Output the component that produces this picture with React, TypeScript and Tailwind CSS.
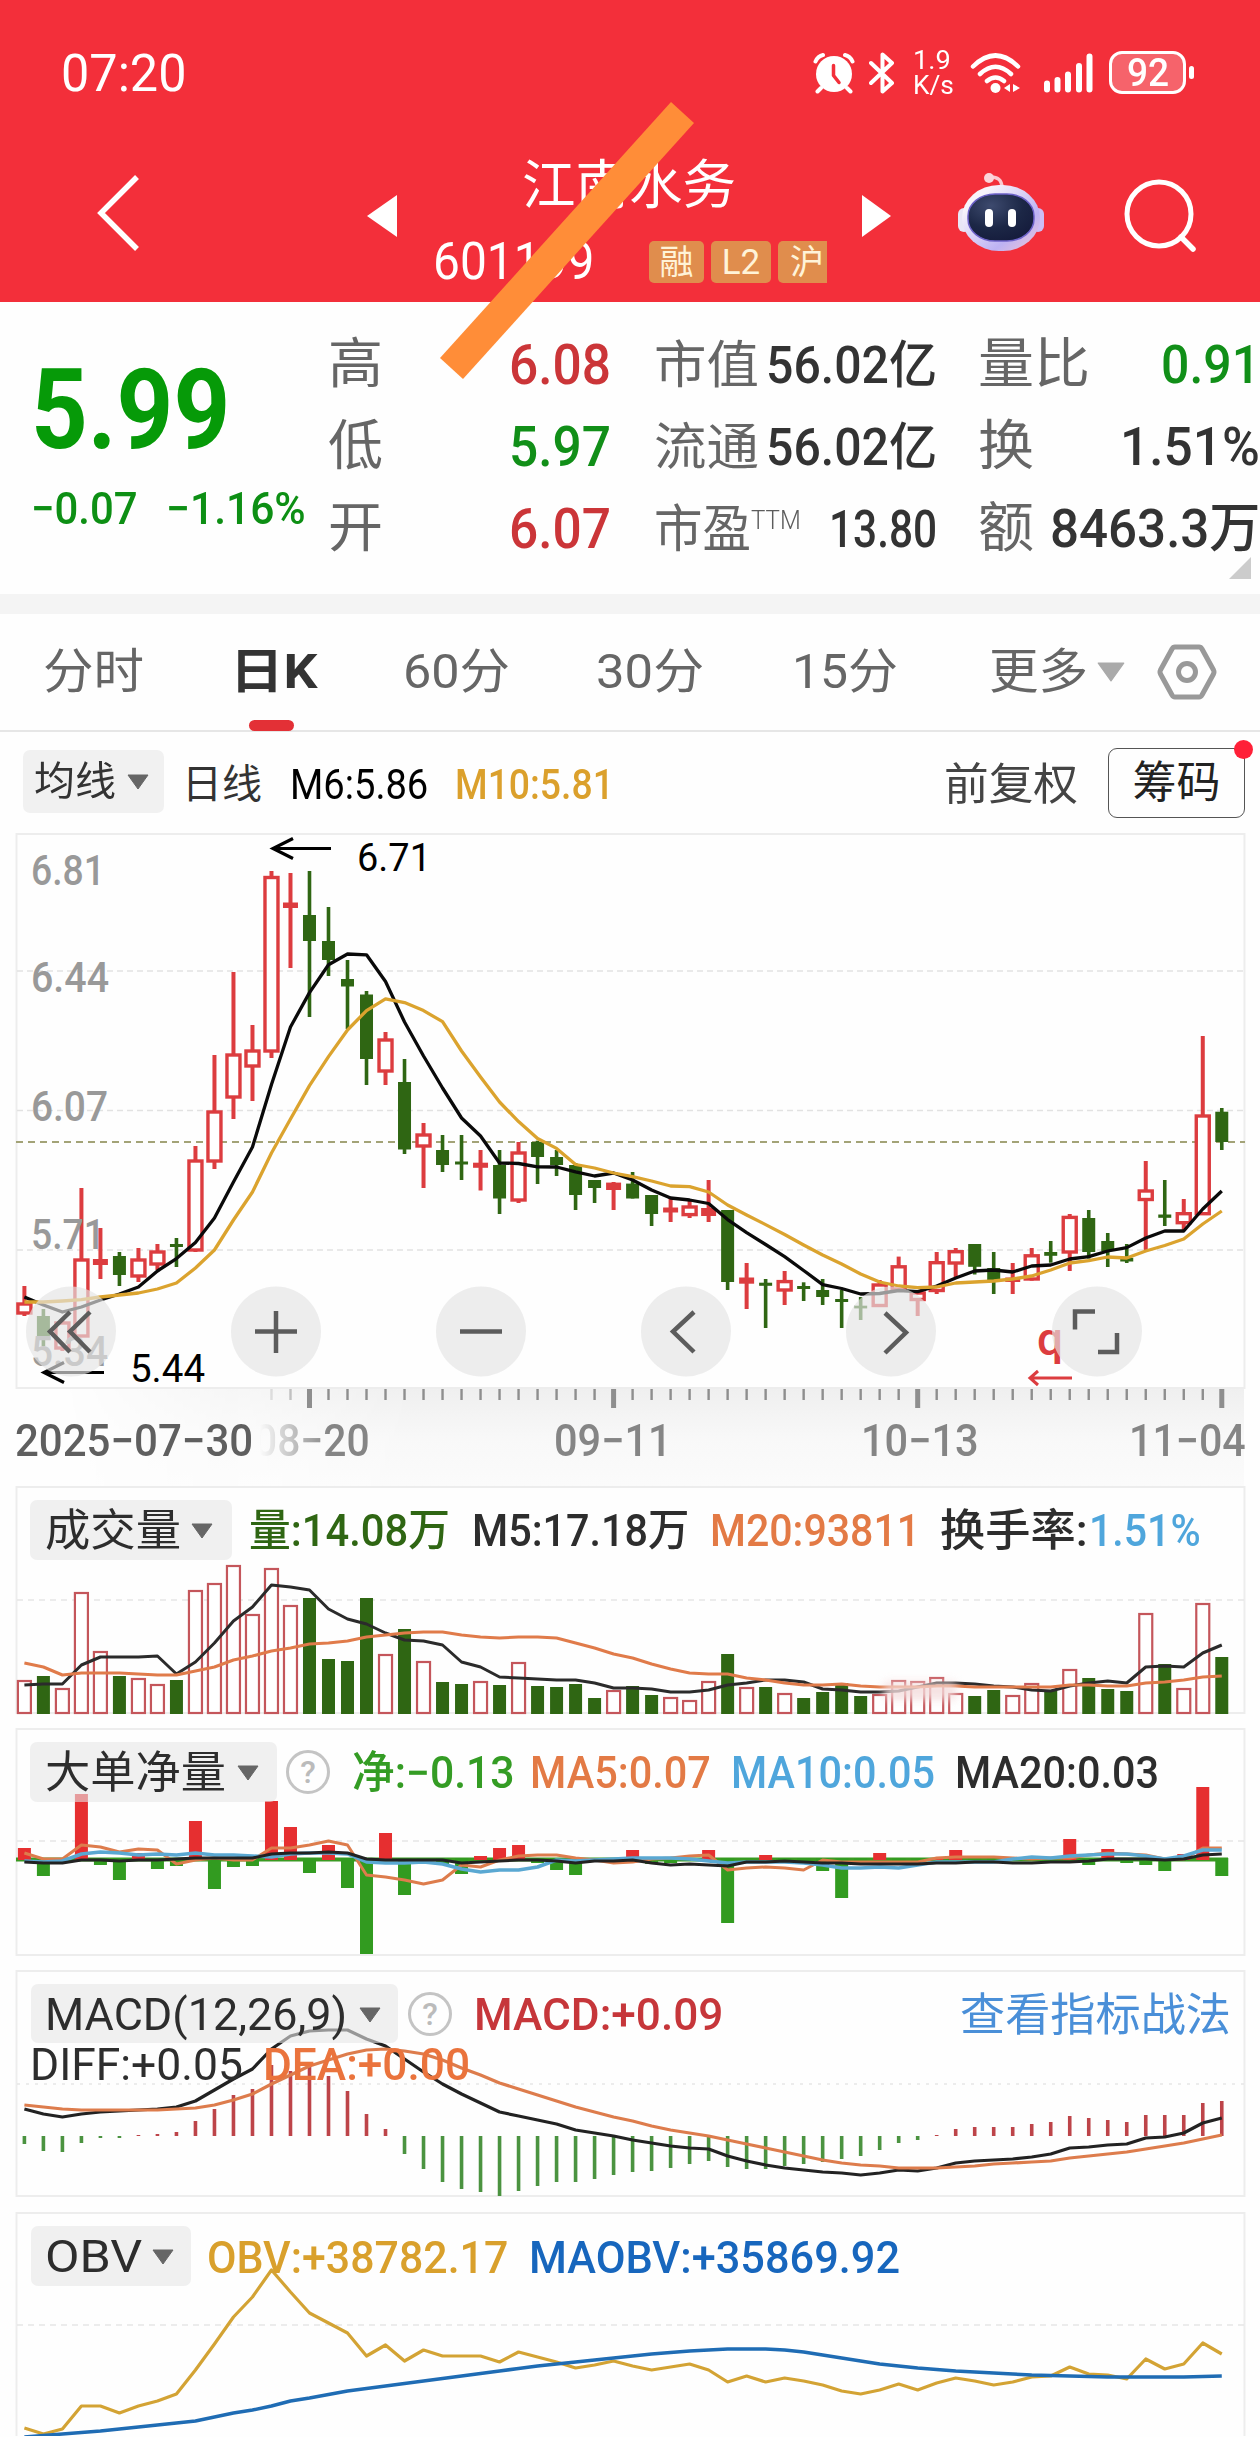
import type React from "react";
import { useLayoutEffect, useRef, useState } from "react";

type Candle = [string, number, number, number, number];

const STEP = 19.006;
const cx = (i: number) => 24.4 + i * STEP;

// colour, high, body top, body bottom, low (px from the top of the chart)
const candles: Candle[] = [
  ["r", 456, 474, 483, 486], ["g", 479, 486, 506, 516], ["r", 489, 493, 518, 521], ["r", 358, 430, 506, 506],
  ["r", 398, 430, 434, 449], ["g", 422, 426, 445, 456], ["r", 418, 430, 446, 452], ["r", 414, 422, 434, 440],
  ["g", 408, 414, 417, 437], ["r", 316, 331, 420, 422], ["r", 225, 282, 331, 339], ["r", 142, 225, 267, 289],
  ["r", 195, 221, 236, 271], ["r", 41, 47.5, 221, 228], ["r", 43, 73.5, 77, 138], ["g", 41, 85, 111, 187],
  ["g", 77, 111, 130, 146], ["g", 130, 149, 156.5, 199], ["g", 161, 164.5, 229, 255], ["r", 202, 210, 241, 255],
  ["g", 229, 252, 319.5, 324], ["r", 293, 305, 316, 358], ["g", 305, 320, 335, 342], ["g", 305, 331.5, 334.5, 350],
  ["r", 320, 333.7, 336.8, 360.5], ["g", 320, 335, 368.5, 384], ["r", 312, 323, 370, 373], ["g", 310.7, 312, 327, 354],
  ["g", 320, 327, 335, 346], ["g", 333, 335, 365, 380], ["g", 350, 350, 358, 373], ["r", 352, 353.6, 359, 380],
  ["g", 342, 353.6, 368.5, 368.5], ["g", 365, 365, 384, 396], ["r", 367.4, 378.5, 381.5, 392], ["r", 369, 377, 384.6, 388],
  ["r", 350, 379, 385, 392], ["g", 380, 380, 452, 460], ["r", 433, 448.5, 452.7, 479], ["g", 449, 452.7, 455.8, 498],
  ["r", 441, 451.6, 460, 475], ["g", 452.3, 456, 459, 471], ["g", 449, 460, 467, 475], ["g", 460, 469, 472, 498],
  ["g", 467, 475.7, 478.4, 490], ["r", 450, 455, 475.5, 475.5], ["r", 426.6, 436.8, 459, 459], ["r", 461, 463, 469.5, 486],
  ["r", 422, 432.7, 460.5, 464], ["r", 418, 421.7, 433, 447], ["g", 414, 414, 436.8, 444.5], ["g", 422, 438, 450, 464],
  ["r", 433, 448.5, 451, 464], ["r", 418, 425.8, 449, 450.7], ["g", 411, 422, 425.8, 432.7], ["r", 384, 387.4, 422, 441],
  ["g", 380, 388, 422, 428.6], ["g", 403, 411, 421, 437], ["g", 414, 427.8, 431.5, 433], ["r", 331, 361, 369.5, 420.5],
  ["g", 350, 384.5, 387.8, 396], ["r", 369, 383.7, 392.7, 400], ["r", 206, 286, 383.7, 383.7], ["g", 278, 281.7, 312, 320],
];

const ma6 = [467, 475, 482, 477, 470, 464, 457, 441, 428.6, 412.5, 388, 352, 317, 254.5, 197, 162.6, 134.7, 124, 124.8, 151.5, 192, 226, 258, 288, 306, 333, 333.5, 336.8, 337, 341.8, 346, 343, 350, 360, 368, 370, 373.5, 389.6, 402.6, 414.5, 426.7, 440.5, 454.6, 458.5, 464, 463.5, 460.5, 461.7, 456, 448, 441, 440, 442, 436, 435, 429, 426.6, 421, 417.6, 408, 401, 401, 379, 361];
const ma10 = [472, 472, 471, 469.6, 467, 465, 463, 459, 453, 438, 420, 390, 362, 323, 289, 255.6, 226.6, 200, 180.6, 168.8, 172.6, 180.6, 191.7, 221, 247, 272, 291.6, 308.5, 318.4, 334.5, 338, 343, 346.7, 351, 356, 356.7, 362, 375, 385, 394.6, 404.5, 415, 425, 434, 444, 452, 456, 457.6, 457, 453, 452, 451, 449, 446, 440, 433, 430.7, 427, 428, 421, 415.5, 409, 394, 381];

const volume = [34, 38, 26, 122, 63, 38, 36, 30, 34, 124, 131, 149, 100, 146, 109, 116, 55, 53, 116, 60, 85, 53, 32, 30, 33, 29, 52, 28, 27, 30, 16, 24, 28, 19, 17, 14, 33, 60, 27, 27, 21, 16, 22, 31, 18, 20, 34, 33, 37, 21, 18, 24, 19, 31, 23, 45, 36, 25, 23, 101, 50, 26, 111, 57];
const vol5 = [29, 30, 30, 49, 57, 57, 57, 58, 40, 52, 71, 93, 107, 129, 127, 124, 105, 95, 90, 81, 74, 73, 69, 52, 47, 37, 36, 35, 34, 34, 31, 26, 26, 25, 22, 22, 24, 29, 31, 34, 34, 32, 25, 24, 22, 22, 23, 27, 31, 31, 30, 28, 27, 24, 23, 28, 31, 33, 31, 47, 48, 47, 61, 69];
const vol20 = [51, 47, 39, 41, 41, 41, 40, 39, 39, 43, 47, 54, 58, 63, 66, 70, 71, 73, 77, 79, 81, 82, 82, 79, 77, 76, 77, 77, 76, 71, 66, 60, 56, 50, 45, 41, 40, 40, 36, 34, 31, 29, 29, 30, 28, 27, 27, 27, 28, 28, 27, 27, 27, 27, 27, 29, 29, 28, 28, 31, 32, 34, 37, 38];

const net = [11, -17, 0, 65, -6, -21, 6, -10, -7, 38, -30, -8, -7, 58, 32, -14, 14, -29, -95, 26, -36, 0, -6, -15, 3, 11, 14, -4, -11, -16, 0, 0, 9, -5, -4, 0, 9, -64, 0, 4, -1, -3, -12, -39, -3, 6, -5, -2, 1, 9, -2, -3, -1, 1, -4, 20, -6, 10, -4, -6, -12, 5, 72, -17];
const net5 = [6, 0, 0, 14, 12, 7, 10, 9, -5, -1, 1, -1, -1, 11, 11, 14, 18, 14, -16, -18, -21, -25, -21, -6, -8, -1, 3, 4, 4, 1, -1, -4, -3, 0, 1, 3, 4, -11, -9, -8, -9, -11, -1, -3, -3, -3, -3, -3, 1, 2, 2, 2, 1, 0, 1, 1, 4, 6, 5, 4, 0, 0, 11, 11];
const net10 = [-2, -3, -2, 5, 7, 6, 4, 5, 4, 6, 4, 4, 3, 2, 5, 6, 6, 5, -3, -4, -4, -3, -5, -10, -13, -11, -11, -8, -1, -2, -1, 0, 1, 1, 1, 0, -2, -4, -3, -3, -3, -4, -6, -9, -9, -8, -9, -6, -3, -3, -3, -3, 0, 2, 1, 3, 4, 5, 5, 3, 0, 3, 9, 9];
const net20 = [-3, -4, -4, -1, -1, -2, -1, -1, 0, 1, 1, 1, 1, 5, 6, 6, 7, 6, 0, -1, -1, -1, -1, -4, -3, -2, -1, -1, -2, -4, -2, -2, -1, -4, -6, -5, -6, -7, -3, -3, -2, -3, -4, -4, -5, -5, -5, -5, -4, -4, -3, -3, -4, -4, -3, -3, -2, 0, 0, 0, -1, 0, 4, 5];

const macd = [-8, -15, -16, -7, -2, -2, 1, 2, 4, 15, 27, 41, 47, 71, 65, 74, 60, 45, 22, 7, -18, -33, -46, -53, -56, -60, -55, -50, -46, -46, -43, -39, -36, -35, -32, -28, -25, -31, -33, -33, -30, -28, -26, -23, -20, -14, -7, -4, 1, 7, 9, 9, 9, 12, 14, 20, 18, 16, 14, 21, 21, 21, 33, 35];
const diff = [27, 22, 19, 22, 24, 25, 26, 27, 29, 35, 46, 57, 67, 87, 100, 105, 106, 106, 97, 90, 77, 64, 52, 42, 33, 24, 20, 16, 12, 6, 3, 0, -4, -7, -10, -12, -13, -20, -25, -29, -32, -34, -36, -37, -39, -37, -34, -35, -32, -27, -25, -24, -23, -21, -18, -12, -11, -9, -8, -2, -1, 3, 13, 18];
const dea = [31, 29, 27, 26, 26, 26, 26, 26, 27, 28, 31, 36, 42, 52, 61, 70, 76, 82, 86, 87, 85, 82, 76, 68, 61, 53, 47, 41, 35, 29, 24, 19, 15, 10, 6, 3, 0, -4, -8, -12, -16, -20, -24, -27, -29, -30, -32, -32, -32, -31, -30, -28, -27, -26, -25, -22, -20, -18, -16, -13, -10, -7, -3, 1];

const obv = [216, 222, 217, 194, 194, 201, 194, 189, 182, 158, 132, 105, 85, 58, 80, 101, 111, 121, 144, 133, 149, 138, 144, 144, 144, 150, 140, 145, 150, 156, 153, 149, 154, 158, 155, 152, 158, 170, 164, 170, 166, 169, 173, 179, 182, 178, 172, 178, 171, 166, 169, 173, 170, 165, 164, 155, 162, 163, 167, 147, 157, 152, 131, 142];
const maobv = [225, 223.5, 222, 220.5, 219, 217, 215, 213, 211, 209, 205, 201, 198, 194, 189, 186, 182.5, 179, 176.5, 174, 171.5, 169, 166.5, 164, 161.5, 159, 156.5, 154, 152, 150, 148, 146, 144, 142, 140.5, 139, 138, 137, 137, 137, 138, 140, 143, 146, 149, 152, 154, 156, 157.5, 159, 160, 161, 162, 163, 163.5, 164, 164.5, 165, 165, 165, 165, 165, 164.5, 164];

const RED = "#dc3c3f";
const GREEN = "#2f6613";

// points for a polyline; with a base the values count upwards from it
const line = (values: number[], base?: number) =>
  values.map((v, i) => `${cx(i)},${base === undefined ? v : base - v}`).join(" ");

// squeezes or stretches its text to the width of its own box
const Fit = ({ className, children }: { className: string; children: React.ReactNode }) => {
  const outer = useRef<HTMLSpanElement>(null);
  const inner = useRef<HTMLSpanElement>(null);
  const [scale, setScale] = useState(1);

  useLayoutEffect(() => {
    if (outer.current && inner.current) {
      setScale(outer.current.clientWidth / inner.current.offsetWidth);
    }
  }, [children]);

  return (
    <span ref={outer} className={`block shrink-0 whitespace-nowrap leading-none ${className}`}>
      <span ref={inner} className="inline-block origin-left" style={{ transform: `scaleX(${scale})` }}>
        {children}
      </span>
    </span>
  );
};

const Caret = ({ className }: { className: string }) => (
  <svg viewBox="0 0 22 16" className={`shrink-0 ${className}`}>
    <path d="M1 1h20L11 15z" fill="currentColor" stroke="currentColor" strokeLinejoin="round" />
  </svg>
);

const Help = () => (
  <span className="flex h-[44px] w-[44px] shrink-0 items-center justify-center rounded-full border-[3px] border-[#c4c4c4] text-[32px] leading-none text-[#bbb]">
    ?
  </span>
);

const Frame = ({ h, grid, dash = "6 5" }: { h: number; grid: number; dash?: string }) => (
  <>
    <rect x="16.5" y="1" width="1228" height={h} fill="none" stroke="#ededed" strokeWidth="2" />
    <line x1="17" x2="1244" y1={grid} y2={grid} stroke="#e6e6e6" strokeWidth="1.5" strokeDasharray={dash} />
  </>
);

const StatusBar = () => (
  <div className="flex h-[145px] items-center">
    <Fit className="ml-[61px] w-[126px] pt-[2px] text-[52px]">07:20</Fit>
    <svg viewBox="0 0 42 42" className="ml-[626px] h-[42px] w-[42px] shrink-0">
      <circle cx="21" cy="22" r="18" fill="#fff" />
      <path d="M2.5 9.5Q5 4 10 3M39.5 9.5Q37 4 32 3M8 36l-3.500 3.500M34 36l3.500 3.500" stroke="#fff" strokeWidth="4" strokeLinecap="round" fill="none" />
      <path d="M20.5 13.500v10l5.500 7" stroke="#f32f3a" strokeWidth="3.500" strokeLinecap="round" strokeLinejoin="round" fill="none" />
    </svg>
    <svg viewBox="0 0 26 42" className="ml-[14px] h-[42px] w-[26px] shrink-0">
      <path d="M2 11l21 20-9.500 8.500V25M2 31l21-20-9.500-8.500V17" stroke="#fff" strokeWidth="4" strokeLinecap="round" strokeLinejoin="round" fill="none" />
    </svg>
    <div className="ml-[18px] flex w-[42px] flex-col">
      <Fit className="w-[38px] text-[25px]">1.9</Fit>
      <Fit className="w-[41px] text-[25px]">K/s</Fit>
    </div>
    <svg viewBox="0 0 52 42" className="ml-[15px] h-[42px] w-[52px] shrink-0">
      <g stroke="#fff" strokeWidth="4.500" strokeLinecap="round" fill="none">
        <path d="M3 14.500Q25.500-7.500 48 14.500M10 22q15.500-14.500 31 0M17 29q8.500-7 17 0" />
      </g>
      <circle cx="25.500" cy="36" r="5" fill="#fff" />
      <path d="M40 32v8l-6-4zM43 32v8l7-4z" fill="#fff" />
    </svg>
    <svg viewBox="0 0 52 42" className="ml-[21px] h-[42px] w-[52px] shrink-0">
      <path d="M4 31.500v6M14.500 28v9.500M25 22.500v15M36 14v23.500M46.500 4.500v33" stroke="#fff" strokeWidth="6" strokeLinecap="round" />
    </svg>
    <div className="ml-[14px] flex h-[43px] w-[77px] shrink-0 items-center justify-center rounded-[13px] border-[3px] border-white bg-white/25">
      <Fit className="w-[42px] text-[38px] font-medium">92</Fit>
    </div>
    <span className="ml-[3px] h-[13px] w-[5px] rounded-full bg-white" />
  </div>
);

const Robot = () => (
  <svg viewBox="0 0 88 80" className="h-[80px] w-[88px] shrink-0">
    <defs>
      <linearGradient id="shell" x1="0" y1="0" x2="1" y2="1">
        <stop offset="0.200" stopColor="#f7f4fb" />
        <stop offset="0.700" stopColor="#bdb2f3" />
        <stop offset="1" stopColor="#f3c6d4" />
      </linearGradient>
      <radialGradient id="visor" cx="0.350" cy="0.250" r="0.800">
        <stop offset="0" stopColor="#3d4a6e" />
        <stop offset="0.600" stopColor="#1c2746" />
        <stop offset="1" stopColor="#151c3c" />
      </radialGradient>
    </defs>
    <path d="M32 5q13-1 13 11" stroke="#fbc9d0" strokeWidth="3.500" fill="none" />
    <circle cx="32" cy="6" r="5" fill="#fbd5da" />
    <rect x="1" y="36" width="12" height="24" rx="6" fill="#e9e6f6" />
    <rect x="75" y="36" width="12" height="24" rx="6" fill="#cdbdf4" />
    <rect x="5" y="13" width="78" height="66" rx="37" ry="33" fill="url(#shell)" />
    <rect x="11" y="22" width="66" height="47" rx="27" ry="22" fill="url(#visor)" stroke="#6d62c8" strokeWidth="1.500" />
    <rect x="28" y="37" width="8" height="18" rx="4" fill="#fff" />
    <rect x="51" y="37" width="8" height="18" rx="4" fill="#fff" />
  </svg>
);

const NavBar = () => (
  <div className="flex h-[157px] items-start">
    <svg viewBox="0 0 46 80" className="ml-[95px] mt-[28px] h-[80px] w-[46px] shrink-0">
      <path d="M42 4L6 40l36 36" stroke="#fff" strokeWidth="5.500" fill="none" />
    </svg>
    <svg viewBox="0 0 30 42" className="ml-[226px] mt-[50px] h-[42px] w-[30px] shrink-0">
      <path d="M30 0v42L0 21z" fill="#fff" />
    </svg>
    <div className="ml-[36px] w-[429px] shrink-0">
      <Fit className="ml-[89px] mt-[15px] w-[214px] text-[53px] font-normal">江南水务</Fit>
      <div className="mt-[23px] flex items-center">
        <Fit className="w-[161px] text-[52px]">601199</Fit>
        <div className="ml-[55px] flex w-[178px] gap-[7px] text-[#fff3d8]">
          <span className="flex h-[42px] w-[55px] shrink-0 items-center justify-center rounded-[5px] bg-[#e08d4d] text-[34px] leading-none">融</span>
          <span className="flex h-[42px] w-[60px] shrink-0 items-center justify-center rounded-[5px] bg-[#e08d4d] text-[35px] leading-none">L2</span>
          <span className="flex h-[42px] w-[49px] shrink-0 items-center rounded-l-[5px] bg-[#e08d4d] pl-[12px] text-[34px] leading-none">沪</span>
        </div>
      </div>
    </div>
    <svg viewBox="0 0 30 42" className="mt-[50px] h-[42px] w-[30px] shrink-0">
      <path d="M0 0v42l29-21z" fill="#fff" />
    </svg>
    <div className="ml-[65px] mt-[27px]">
      <Robot />
    </div>
    <svg viewBox="0 0 74 74" className="ml-[79px] mt-[34px] h-[74px] w-[74px] shrink-0">
      <circle cx="35" cy="35" r="32" stroke="#fff" strokeWidth="5" fill="none" />
      <path d="M57 58l12 12" stroke="#fff" strokeWidth="5.500" strokeLinecap="round" />
    </svg>
  </div>
);

const Quote = () => (
  <div className="relative flex h-[292px] text-[#333]">
    <div className="w-[328px] shrink-0 pl-[31px] text-[#0d8f14]">
      <Fit className="mt-[53px] w-[199px] text-[111px] font-bold text-[#069a08]">5.99</Fit>
      <div className="mt-[20px] flex">
        <Fit className="w-[107px] text-[45px] font-medium">−0.07</Fit>
        <Fit className="ml-[28px] w-[140px] text-[45px] font-medium">−1.16%</Fit>
      </div>
    </div>
    <div className="w-[283px] shrink-0 pt-[22px] text-[56px] font-medium">
      <div className="flex h-[82px] items-center justify-between">
        <Fit className="w-[55px] text-[54px] font-normal text-[#666]">高</Fit>
        <Fit className="w-[102px] text-[#cb3538]">6.08</Fit>
      </div>
      <div className="flex h-[82px] items-center justify-between">
        <Fit className="w-[55px] text-[54px] font-normal text-[#666]">低</Fit>
        <Fit className="w-[102px] text-[#118f18]">5.97</Fit>
      </div>
      <div className="flex h-[82px] items-center justify-between">
        <Fit className="w-[55px] text-[54px] font-normal text-[#666]">开</Fit>
        <Fit className="w-[102px] text-[#cb3538]">6.07</Fit>
      </div>
    </div>
    <div className="ml-[43px] w-[283px] shrink-0 pt-[22px] text-[51px] font-medium">
      <div className="flex h-[82px] items-center justify-between">
        <Fit className="w-[105px] font-normal text-[#666]">市值</Fit>
        <Fit className="w-[171px]">56.02亿</Fit>
      </div>
      <div className="flex h-[82px] items-center justify-between">
        <Fit className="w-[105px] font-normal text-[#666]">流通</Fit>
        <Fit className="w-[171px]">56.02亿</Fit>
      </div>
      <div className="flex h-[82px] items-center">
        <Fit className="w-[97px] font-normal text-[#666]">市盈</Fit>
        <Fit className="-mt-[18px] w-[50px] text-[25px] font-light text-[#5c5c5c]">TTM</Fit>
        <Fit className="ml-auto w-[108px]">13.80</Fit>
      </div>
    </div>
    <div className="ml-[41px] w-[282px] shrink-0 pt-[22px] text-[54px] font-medium">
      <div className="flex h-[82px] items-center justify-between">
        <Fit className="w-[112px] font-normal text-[#666]">量比</Fit>
        <Fit className="w-[99px] text-[#118f18]">0.91</Fit>
      </div>
      <div className="flex h-[82px] items-center justify-between">
        <Fit className="w-[56px] font-normal text-[#666]">换</Fit>
        <Fit className="w-[140px]">1.51%</Fit>
      </div>
      <div className="flex h-[82px] items-center justify-between">
        <Fit className="w-[56px] font-normal text-[#666]">额</Fit>
        <Fit className="w-[210px]">8463.3万</Fit>
      </div>
    </div>
    <svg viewBox="0 0 22 22" className="absolute bottom-[15px] right-[9px] h-[22px] w-[22px]">
      <path d="M22 0v22H0z" fill="#ccc" />
    </svg>
  </div>
);

const Tabs = () => (
  <div className="flex h-[118px] items-center border-b-2 border-[#e6e6e6] text-[48px] text-[#666]">
    <Fit className="ml-[43px] w-[101px]">分时</Fit>
    <div className="relative ml-[86px]">
      <Fit className="w-[88px] font-bold text-[#333]">日K</Fit>
      <span className="absolute left-[19px] top-[72px] h-[11px] w-[45px] rounded-full bg-[#e33036]" />
    </div>
    <Fit className="ml-[85px] w-[107px]">60分</Fit>
    <Fit className="ml-[86px] w-[108px]">30分</Fit>
    <Fit className="ml-[88px] w-[106px]">15分</Fit>
    <Fit className="ml-[91px] w-[99px]">更多</Fit>
    <Caret className="ml-[9px] h-[22px] w-[28px] text-[#aaa]" />
    <svg viewBox="0 0 60 58" className="ml-[32px] h-[58px] w-[60px]">
      <path d="M18 4h24q2 0 3 2l11.500 21q1 2 0 4L45 52q-1 2-3 2H18q-2 0-3-2L3.500 31q-1-2 0-4L15 6q1-2 3-2z" fill="none" stroke="#999" strokeWidth="5" />
      <circle cx="30" cy="29" r="8.500" fill="none" stroke="#999" strokeWidth="5" />
    </svg>
  </div>
);

const MaRow = () => (
  <div className="flex h-[101px] items-start pt-[18px] text-[42px] font-medium text-[#333]">
    <div className="ml-[23px] flex h-[63px] w-[141px] items-center rounded-[7px] bg-[#f1f1f1] pl-[11px] pt-px text-[#666]">
      <Fit className="w-[82px] text-[40px] font-normal text-[#333]">均线</Fit>
      <Caret className="ml-[11px] h-[16px] w-[22px]" />
    </div>
    <div className="flex h-[70px] items-center">
      <Fit className="ml-[18px] w-[80px] text-[40px] font-normal">日线</Fit>
      <Fit className="ml-[28px] w-[138px] font-normal text-black">M6:5.86</Fit>
      <Fit className="ml-[27px] w-[159px] text-[#dba02c]">M10:5.81</Fit>
      <Fit className="ml-[330px] w-[134px] text-[44px] font-normal text-[#444]">前复权</Fit>
    </div>
    <div className="relative -mt-[2px] ml-[30px] flex h-[70px] w-[137px] shrink-0 items-center justify-center rounded-[9px] border-[1.5px] border-[#555]">
      <Fit className="w-[88px] text-[44px] font-normal text-[#222]">筹码</Fit>
      <span className="absolute -right-[9px] -top-[9px] h-[19px] w-[19px] rounded-full bg-[#ff2038]" />
    </div>
  </div>
);

const Axis = ({ y, w, children }: { y: number; w: number; children: string }) => (
  <text x="31" y={y} textLength={w} lengthAdjust="spacingAndGlyphs" fontSize="43" fontWeight="500" fill="#999">
    {children}
  </text>
);

const circles = [71, 276, 481, 686, 891, 1097];

const KChart = () => (
  <svg viewBox="0 0 1260 560" className="block h-[560px] w-full">
    <rect x="16.500" y="4" width="1228" height="554" fill="none" stroke="#ededed" strokeWidth="2" />
    {[141, 280.5, 420].map((y) => (
      <line key={y} x1="17" x2="1244" y1={y} y2={y} stroke="#e2e2e2" strokeWidth="1.500" strokeDasharray="6 4" />
    ))}
    <line x1="16" x2="1245" y1="312" y2="312" stroke="#a3a377" strokeWidth="1.800" strokeDasharray="7 5" />
    {candles.map(([c, hi, top, bot, lo], i) =>
      c === "g" ? (
        <g key={i} fill={GREEN}>
          <rect x={cx(i) - 1.8} y={hi} width="3.600" height={lo - hi} />
          <rect x={cx(i) - 6.5} y={top} width="13" height={bot - top} />
        </g>
      ) : (
        <g key={i} fill={RED}>
          <rect x={cx(i) - 2} y={hi} width="4" height={top - hi} />
          <rect x={cx(i) - 2} y={bot} width="4" height={lo - bot} />
          <rect x={cx(i) - 6.5} y={top} width="13" height={bot - top} fill={bot - top > 6 ? "#fff" : RED} stroke={RED} strokeWidth={bot - top > 6 ? 3.4 : 2} />
        </g>
      )
    )}
    <Axis y={55} w={74}>6.81</Axis>
    <Axis y={162} w={78}>6.44</Axis>
    <Axis y={291} w={77}>6.07</Axis>
    <Axis y={419} w={74}>5.71</Axis>
    <Axis y={536} w={77}>5.34</Axis>
    <polyline points={line(ma6)} fill="none" stroke="#0a0a0a" strokeWidth="3.300" strokeLinejoin="round" />
    <polyline points={line(ma10)} fill="none" stroke="#dba32e" strokeWidth="3.300" strokeLinejoin="round" />
    <g fill="none" stroke="#000" strokeWidth="3.200">
      <path d="M331 18.500H274M293 8.500L273 18.500l20 10" />
      <path d="M104 542.500H45M64 532.500L44 542.500l20 10" />
    </g>
    <text x="357" y="41" textLength="74" lengthAdjust="spacingAndGlyphs" fontSize="39">6.71</text>
    <text x="130" y="552" textLength="75" lengthAdjust="spacingAndGlyphs" fontSize="39">5.44</text>
    <text x="1037" y="525" fontSize="46" fontWeight="500" fill={RED}>q</text>
    <path d="M1072 548h-41M1038 541l-8 7 8 7" fill="none" stroke={RED} strokeWidth="3" />
    {circles.map((x) => (
      <circle key={x} cx={x} cy="501.500" r="45" fill="#e4e4e4" fillOpacity="0.660" />
    ))}
    <g fill="none" stroke="#5c5c5c" strokeWidth="4.500">
      <path d="M70 482L50 501.500 70 522M90 482L70 501.500 90 522" />
      <path d="M255 501.500h42M276 481v42" />
      <path d="M460 501.500h42" />
      <path d="M694 482l-21 19.500 21 20.500" />
      <path d="M885 483l21 19.500-21 20.500" />
      <path d="M1095 481.500h-20v18M1098 522h19v-19" />
    </g>
  </svg>
);

const TimeAxis = () => (
  <div className="relative h-[97px] text-[#858585]">
    <div className="absolute inset-y-0 left-[60px] right-[16px] bg-linear-to-b from-[#efefef] via-[#f8f8f8] to-[#fbfbfb] [mask-image:linear-gradient(90deg,transparent,black_30%)]" />
    <svg viewBox="0 0 1260 20" className="absolute inset-x-0 top-0 h-[20px] w-full">
      {candles.slice(13).map((_, k) => {
        const i = k + 13;
        const major = i % 16 === 15;
        return (
          <rect
            key={i}
            x={cx(i) - (major ? 2.5 : 1.2)}
            y="0"
            width={major ? 5 : 2.4}
            height={major ? 19 : 11}
            fill="#8e8e8e"
            opacity={i === 13 ? 0.25 : i === 14 ? 0.5 : 1}
          />
        );
      })}
    </svg>
    <div className="relative flex pt-[29px] text-[45px] font-medium">
      <Fit className="ml-[15px] w-[238px] text-[#5f5f5f]">2025−07−30</Fit>
      <Fit className="ml-[1px] w-[116px] [mask-image:linear-gradient(90deg,transparent_5%,black_65%)]">08−20</Fit>
      <Fit className="ml-[184px] w-[118px]">09−11</Fit>
      <Fit className="ml-[189px] w-[118px]">10−13</Fit>
      <Fit className="ml-[150px] w-[117px]">11−04</Fit>
    </div>
  </div>
);

const VolumePanel = () => (
  <section className="relative h-[242px]">
    <svg viewBox="0 0 1260 242" className="absolute inset-0 h-full w-full">
      <Frame h={226} grid={114} />
      {volume.map((v, i) =>
        candles[i][0] === "g" ? (
          <rect key={i} x={cx(i) - 6.5} y={228 - v} width="13" height={v} fill={GREEN} />
        ) : (
          <rect key={i} x={cx(i) - 6.5} y={229 - v} width="13" height={v - 2} fill="#fff" stroke="#c4565b" strokeWidth="2.200" />
        )
      )}
      <polyline points={line(vol5, 228)} fill="none" stroke="#2b2b2b" strokeWidth="3" strokeLinejoin="round" />
      <polyline points={line(vol20, 228)} fill="none" stroke="#e07b4a" strokeWidth="3" strokeLinejoin="round" />
      <rect x="884" y="196" width="72" height="18" fill="#f4dcdc" opacity="0.800" className="blur-[4px]" />
    </svg>
    <div className="relative flex items-center pl-[30px] pt-[14px] text-[44px] font-medium">
      <div className="flex h-[60px] w-[202px] items-center rounded-[7px] bg-[#e6e6e6]/60 pl-[15px] pt-[2px] text-[#666]">
        <Fit className="w-[136px] font-normal text-[#2d2d2d]">成交量</Fit>
        <Caret className="ml-[10px] h-[16px] w-[22px]" />
      </div>
      <Fit className="ml-[17px] w-[201px] pt-[2px] text-[#2f6613]">量:14.08万</Fit>
      <Fit className="ml-[22px] w-[217px] pt-[2px] text-[#2d2d2d]">M5:17.18万</Fit>
      <Fit className="ml-[21px] w-[210px] pt-[2px] text-[#e37a45]">M20:93811</Fit>
      <Fit className="ml-[20px] w-[148px] pt-[2px] text-[#2d2d2d]">换手率:</Fit>
      <Fit className="ml-[1px] w-[112px] pt-[2px] text-[#4fa6dc]">1.51%</Fit>
    </div>
  </section>
);

const NetPanel = () => (
  <section className="relative h-[242px]">
    <svg viewBox="0 0 1260 242" className="absolute inset-0 h-full w-full">
      <Frame h={226} grid={113} />
      <line x1="16" x2="1228" y1="131.500" y2="131.500" stroke="#3a9a22" strokeWidth="4" />
      {net.map((v, i) => (
        <rect key={i} x={cx(i) - 6.5} y={v > 0 ? 131 - v : 130} width="13" height={Math.abs(v) + 1} fill={v > 0 ? "#e62f30" : "#329b20"} />
      ))}
      <polyline points={line(net5, 131)} fill="none" stroke="#dd7c4c" strokeWidth="3" strokeLinejoin="round" />
      <polyline points={line(net10, 131)} fill="none" stroke="#5aa8d2" strokeWidth="3.500" strokeLinejoin="round" />
      <polyline points={line(net20, 131)} fill="none" stroke="#222" strokeWidth="3" strokeLinejoin="round" />
    </svg>
    <div className="relative flex items-center pl-[30px] pt-[14px] text-[44px] font-medium">
      <div className="flex h-[60px] w-[247px] items-center rounded-[7px] bg-[#e6e6e6]/60 pl-[15px] pt-[2px] text-[#666]">
        <Fit className="w-[181px] font-normal text-[#2d2d2d]">大单净量</Fit>
        <Caret className="ml-[11px] h-[16px] w-[22px]" />
      </div>
      <div className="ml-[9px]">
        <Help />
      </div>
      <Fit className="ml-[22px] w-[163px] pt-[2px] text-[#349c24]">净:−0.13</Fit>
      <Fit className="ml-[15px] w-[181px] pt-[2px] text-[#e37a45]">MA5:0.07</Fit>
      <Fit className="ml-[20px] w-[204px] pt-[2px] text-[#4fa6dc]">MA10:0.05</Fit>
      <Fit className="ml-[20px] w-[204px] pt-[2px] text-[#2d2d2d]">MA20:0.03</Fit>
    </div>
  </section>
);

const MacdPanel = () => (
  <section className="relative h-[242px]">
    <svg viewBox="0 0 1260 242" className="absolute inset-0 h-full w-full">
      <Frame h={225} grid={114} dash="3 6" />
      {macd.map((v, i) => (
        <rect key={i} x={cx(i) - 1.8} y={v > 0 ? 166 - v : 166} width="3.600" height={Math.abs(v)} fill={v > 0 ? "#bd4449" : "#4b9340"} />
      ))}
      <polyline points={line(diff, 166)} fill="none" stroke="#222" strokeWidth="3.200" strokeLinejoin="round" />
      <polyline points={line(dea, 166)} fill="none" stroke="#dd7c4c" strokeWidth="3.200" strokeLinejoin="round" />
    </svg>
    <div className="relative flex items-center pl-[31px] pt-[14px] text-[44px] font-medium">
      <div className="flex h-[59px] w-[367px] items-center rounded-[7px] bg-[#e6e6e6]/60 pl-[14px] pt-[2px] text-[#666]">
        <Fit className="w-[302px] font-normal text-[#2d2d2d]">MACD(12,26,9)</Fit>
        <Caret className="ml-[12px] h-[16px] w-[22px]" />
      </div>
      <div className="ml-[10px]">
        <Help />
      </div>
      <Fit className="ml-[22px] w-[249px] pt-[2px] text-[#c6363a]">MACD:+0.09</Fit>
      <Fit className="ml-[237px] w-[271px] pt-[3px] text-[45px] font-normal text-[#4a8fd8]">查看指标战法</Fit>
    </div>
    <div className="relative flex pl-[30px] text-[44px] font-medium">
      <Fit className="w-[213px] font-normal text-[#2d2d2d]">DIFF:+0.05</Fit>
      <Fit className="ml-[20px] w-[207px] text-[#ea733c]">DEA:+0.00</Fit>
    </div>
  </section>
);

const ObvPanel = () => (
  <section className="relative h-[224px]">
    <svg viewBox="0 0 1260 224" className="absolute inset-0 h-full w-full">
      <Frame h={300} grid={113} />
      <polyline points={line(obv)} fill="none" stroke="#d3a334" strokeWidth="3.200" strokeLinejoin="round" />
      <polyline points={line(maobv)} fill="none" stroke="#1f6cb4" strokeWidth="3.500" strokeLinejoin="round" />
    </svg>
    <div className="relative flex items-center pl-[31px] pt-[14px] text-[44px] font-medium">
      <div className="flex h-[60px] w-[160px] items-center rounded-[7px] bg-[#e6e6e6]/60 pl-[14px] pt-[2px] text-[#666]">
        <Fit className="w-[97px] font-normal text-[#2d2d2d]">OBV</Fit>
        <Caret className="ml-[10px] h-[16px] w-[22px]" />
      </div>
      <Fit className="ml-[16px] w-[301px] pt-[3px] text-[#d9a02c]">OBV:+38782.17</Fit>
      <Fit className="ml-[21px] w-[371px] pt-[3px] text-[#1766bd]">MAOBV:+35869.92</Fit>
    </div>
  </section>
);

const App = () => {
  return (
    <main className="relative h-[2437px] w-[1260px] overflow-hidden bg-[#fefefe] font-[Roboto,'Noto_Sans_CJK_SC',sans-serif]">
      <header className="h-[302px] bg-[#f32f3a] text-white">
        <StatusBar />
        <NavBar />
      </header>
      <Quote />
      <div className="h-[20px] bg-[#f4f4f4]" />
      <Tabs />
      <MaRow />
      <div className="-mt-[3px]">
        <KChart />
      </div>
      <div className="-mt-px">
        <TimeAxis />
      </div>
      <div>
        <VolumePanel />
        <NetPanel />
        <MacdPanel />
        <ObvPanel />
      </div>
      {/* marker stroke drawn across the stock name */}
      <svg viewBox="0 0 256 280" className="absolute left-[439px] top-[101px] h-[280px] w-[256px]">
        <path d="M232 1l23 21L24 278 1 257z" fill="#ff8d38" />
      </svg>
    </main>
  );
};

export default App;
